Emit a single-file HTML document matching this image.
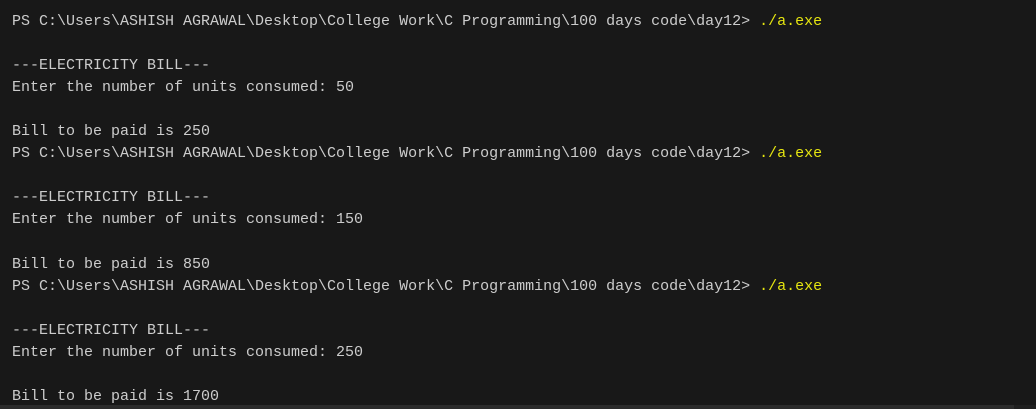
<!DOCTYPE html>
<html><head><style>
html,body{margin:0;padding:0;background:#181818;width:1036px;height:409px;overflow:hidden}
pre{margin:0;position:absolute;left:12px;top:11px;font-family:"Liberation Mono",monospace;font-size:15px;line-height:22.05px;color:#cccccc}
.y{color:#e5e510}
.bar{position:absolute;left:0;top:405px;width:1036px;height:4px;background:#2b2b2b}
.bar2{position:absolute;left:1014px;top:405px;width:22px;height:4px;background:#1f1f1f}
</style></head><body>
<pre>PS C:\Users\ASHISH AGRAWAL\Desktop\College Work\C Programming\100 days code\day12&gt; <span class="y">./a.exe</span>

---ELECTRICITY BILL---
Enter the number of units consumed: 50

Bill to be paid is 250
PS C:\Users\ASHISH AGRAWAL\Desktop\College Work\C Programming\100 days code\day12&gt; <span class="y">./a.exe</span>

---ELECTRICITY BILL---
Enter the number of units consumed: 150

Bill to be paid is 850
PS C:\Users\ASHISH AGRAWAL\Desktop\College Work\C Programming\100 days code\day12&gt; <span class="y">./a.exe</span>

---ELECTRICITY BILL---
Enter the number of units consumed: 250

Bill to be paid is 1700</pre>
<div class="bar"></div><div class="bar2"></div>
</body></html>
